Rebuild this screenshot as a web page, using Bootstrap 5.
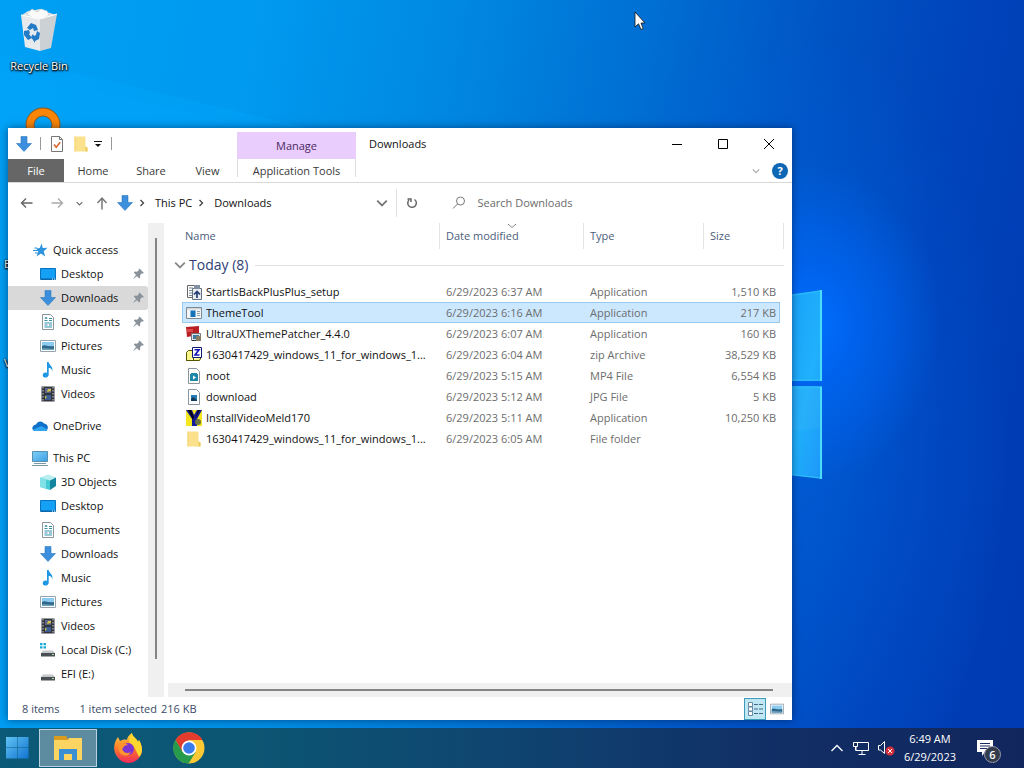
<!DOCTYPE html>
<html lang="en">
<head>
<meta charset="utf-8">
<meta name="viewport" content="width=device-width, initial-scale=1">
<title>Downloads</title>
<link href="https://cdn.jsdelivr.net/npm/bootstrap@5.3.0/dist/css/bootstrap.min.css" rel="stylesheet">
<style>
body{font-family:"Open Sans",sans-serif;font-size:11px;line-height:16px;color:#111;background:#0063d0}
button,input{font:inherit;color:inherit}
button{border:0;background:none;padding:0}
a{color:inherit;text-decoration:none}
svg{display:block;flex:none}
.ic{width:16px;height:16px}
.desktop{background:
 radial-gradient(ellipse 130px 160px at 810px 325px,#006eff 0,rgba(0,104,250,.7) 35%,rgba(0,90,230,0) 100%),
 radial-gradient(ellipse 230px 420px at 780px 440px,rgba(0,100,225,.6) 0,rgba(0,90,220,0) 100%),
 linear-gradient(100deg,#00a0f4 0,#009af0 22%,#0088e2 40%,#0070d4 56%,#0054c4 72%,#0043ba 85%,#003ab2 100%)}
.rays{inset:0;width:100%;height:100%}
.bin{left:5px;top:8px;width:68px}
.desk-label{color:#fff;text-shadow:1px 1px 2px #000,0 1px 2px #000,0 0 2px #000}
.ring{left:25px;top:107px}
.edge-e{left:4px;top:256px}
.edge-w{left:4px;top:355px}
.pointer{left:634px;top:11px}
.explorer{left:8px;right:232px;top:128px;bottom:8px;background:#fff;box-shadow:0 0 8px rgba(0,20,60,.55)}
.ribbon{border-bottom:1px solid #d8d8d8;height:55px}
.title-row{height:31px}
.tab-row{height:24px}
.ribbon-left{width:229px}
.sep{width:1px;height:13px;background:#9a9a9a}
.tab{color:#3a3a3a;text-align:center;height:23px}
.tab-file{background:#666;color:#fff;width:56px}
.w58{width:58px}.w54{width:55px}
.context-tab{width:119px;padding-top:4px}
.context-name{background:#e9cdfc;color:#4b2a63;height:27px}
.context-tools{border:solid #ddd;border-width:0 1px;height:18px;color:#3a3a3a;padding-top:4px}
.context-title{margin-left:13px}
.win-btn{width:46px;height:30px}
.address{height:40px}
.addr-line{width:1px;height:28px;background:#e2e2e2}
.search-area{width:53%}
.search-box{border:0;outline:0;background:none;min-width:0}
.search-box::placeholder{color:#6b6b6b;opacity:1}
.side{width:140px;padding-top:15px}
.side a{height:24px;display:flex;align-items:center;gap:5px;padding-left:32px;padding-right:2px;white-space:nowrap}
.side .top-level{padding-left:24px}
.side .current{background:#d9d9d9;border-radius:0 3px 3px 0}
.side ul+ul{margin-top:8px}
.vbar{width:16px;background:#f0f0f0;padding:15px 7px 38px}
.bar-thumb{background:#858585}
.hbar{height:14px;background:#f0f0f0;padding:6px 19px 6px 17px}
.files{table-layout:fixed;width:602px;margin-left:14px;border-collapse:separate;border-spacing:0}
.files td,.files th{padding:0 0 0 6px;overflow:hidden;white-space:nowrap;text-overflow:ellipsis;font-weight:400}
.files th{height:26px;color:#4c607a;border-right:1px solid #e5e5e5;position:relative}
.files th:first-child{padding-left:3px}
.files .group-cell{height:32px;padding:0;color:#2f4074;font-size:14px;overflow:visible}
.group-head{margin-left:-8px;gap:3px}
.files tbody td{height:21px;color:#6d6d6d}
.files tbody td.name-cell{padding:0 12px 0 4px;color:#111}
.name-cell div{gap:4px}
.files td.size-cell{padding-right:4px;text-align:right}
.files .chosen td{background:#cce8ff;border:solid #99c9ec;border-width:1px 0}
.files .chosen .name-cell{border-left-width:1px;padding-left:3px}
.files .chosen .size-cell{border-right-width:1px;padding-right:3px}
.sort-mark{left:67px;top:0}
.group-line{height:1px;background:#e2e2e2}
.status{height:23px;color:#3a4a66;padding-left:14px}
.view-btn{width:22px;height:22px}
.view-btn.on{background:#bfe8f4;border:1px solid #3d9ab8}
.taskbar{height:40px;background:linear-gradient(90deg,#0b5a78 0,#0c5573 25%,#0f4470 50%,#112f66 75%,#11265c 100%);color:#fff}
.task{width:61px;height:40px}
.task-open{width:58px;height:38px;background:#5d8ca0;border:1px solid #b9d3de}
.start{width:39px;padding-left:5px}
.clock{line-height:18px}
.tray{padding-right:30px}
.count{left:8px;top:7px;width:17px;height:17px;border-radius:50%;background:#333c4c;border:1px solid #99a;line-height:15px;font-weight:600}
</style>
</head>
<body>
<svg width="0" height="0" class="position-absolute" aria-hidden="true">
<defs>
<linearGradient id="gb" gradientUnits="userSpaceOnUse" x1="0" y1="0" x2="24" y2="24"><stop offset="0" stop-color="#63c6f5"/><stop offset="1" stop-color="#0f70cf"/></linearGradient>
<linearGradient id="gf" x1="0" y1="0" x2="0" y2="1"><stop offset="0" stop-color="#ffd23e"/><stop offset=".5" stop-color="#ff7a2a"/><stop offset="1" stop-color="#ee2a5c"/></linearGradient>
<linearGradient id="gm" x1="0" y1="0" x2="1" y2="1"><stop offset="0" stop-color="#7fd0f8"/><stop offset="1" stop-color="#3c9ee4"/></linearGradient>
<linearGradient id="gp" x1="0" y1="0" x2="1" y2="1"><stop offset="0" stop-color="#18a0f8"/><stop offset=".6" stop-color="#20b0fc"/><stop offset="1" stop-color="#1d96f8"/></linearGradient>
<symbol id="i-down" viewBox="0 0 16 16"><path d="M5 .5h6v7h4.500L8 15.500.5 7.500H5z" fill="#3c8fdc" stroke="#2d78c0" stroke-width=".6"/></symbol>
<symbol id="i-desktop" viewBox="0 0 16 16"><path d="M.5 2.500h15v11H.5z" fill="#14a0f5" stroke="#0a72bd"/><path d="M1 13h14" stroke="#0a5f9e"/><path d="M12 13h1M14 13h1" stroke="#fff"/></symbol>
<symbol id="i-star" viewBox="0 0 16 16"><path d="M9.500 1.500l1.300 4.500 4.700-.2-3.800 3.400 1.500 5.300-4.300-3-4.400 3 1.900-5L4 6.500l3.800-.6z" fill="#2d92dd"/><path d="M2.500 6H5M1 8.500h5M3 11h3" stroke="#2d92dd"/></symbol>
<symbol id="i-doc" viewBox="0 0 16 16"><path d="M2.500.5h8l3 3v12h-11z" fill="#fff" stroke="#8a959c"/><path d="M4.500 6.500h3M9 4.500h3M9 6.500h3M4.500 9h7.500M4.500 11h3M9 11h3M4.500 13h7.500M5 5l1-2 1 2" stroke="#338fae" fill="none"/></symbol>
<symbol id="i-pic" viewBox="0 0 16 16"><path d="M.5 2.500h15v11H.5z" fill="#fff" stroke="#93a4ae"/><path d="M2 4h12v8H2z" fill="#8ccaf0"/><path d="M2 8c3-2 5 1 12 0v4H2z" fill="#2e688b"/><path d="M2 10.500c4-1 8 1 12 0V12H2z" fill="#6ba0bd"/></symbol>
<symbol id="i-music" viewBox="0 0 16 16"><path d="M7 0h1.700c.2 3 4.500 4 3.600 9-.7-2.500-2-3-3.600-3v6.500c0 4-6 4-6 .8 0-2.600 2.600-3.200 4.300-2.400z" fill="#1f97e3"/></symbol>
<symbol id="i-video" viewBox="0 0 16 16"><path d="M1.500.5h13v15h-13z" fill="#31353b"/><path d="M3 1v14M13 1v14" stroke="#cfd4d8" stroke-dasharray="1.500 1.500"/><path d="M5 2h6v5H5z" fill="#59678b"/><path d="M5 9h6v5H5z" fill="#3e5e92"/><path d="M8 3h3v2L7 6zM5 10l2 1-2 2" fill="#d9c545"/></symbol>
<symbol id="i-cloud" viewBox="0 0 16 16"><path d="M4 6.500a4.500 4.500 0 0 1 8-1A4 4 0 0 1 15.500 11c-.3 1.300-1.200 2-2.500 2H3.500C-.8 13-.8 7.500 4 6.500z" fill="#1170c9"/><path d="M1 11.500L9.500 8l6 3.500c-.5 1-1.300 1.500-2.500 1.500H3.500C2.300 13 1.400 12.400 1 11.500z" fill="#2fa4ef"/></symbol>
<symbol id="i-pc" viewBox="0 0 16 16"><path d="M.5 1.500h15v10H.5z" fill="url(#gm)" stroke="#5890ae"/><path d="M2 13.500h12M0 15.500h16" stroke="#7a98a8"/></symbol>
<symbol id="i-cube" viewBox="0 0 16 16"><path d="M0 3.500L8 .5l8 3-6 3z" fill="#b7eef0"/><path d="M0 3.500l10 3V16L0 13z" fill="#45cbd5"/><path d="M10 6.500l6-3V12l-6 4z" fill="#14859e"/><path d="M0 3.500l6 2v9L0 13z" fill="#9be9ec" opacity=".7"/></symbol>
<symbol id="i-disk" viewBox="0 0 16 16"><path d="M3 8.500h10l2 2.500H1z" fill="#c4c8ca"/><path d="M1 11h14v3.500H1z" fill="#4a4f53"/><path d="M12 12.500h2" stroke="#a9e7a2"/></symbol>
<symbol id="i-tiles" viewBox="0 0 16 16"><path d="M0 1h2.500v2.300H0zM3.500 1H6v2.300H3.500zM0 4.300h2.500v2.300H0zM3.500 4.300H6v2.300H3.500z" fill="#16acd7"/></symbol>
<symbol id="i-pin" viewBox="0 0 16 16"><path d="M9.500 2.500l4.500 4.500-1.200.6-.9-.3-1.800 2 .1 2.300-1 .9L7 10.300l-4.200 3L6 9 3.800 6.600l.9-1 2.300.1 2-1.800-.3-.8z" fill="#8a9299"/></symbol>
<symbol id="i-folder" viewBox="0 0 16 16"><path d="M1.500.5h11v10l2 1v4h-13z" fill="#fce18c"/><path d="M12.500 10.500l2 1v4h-2z" fill="#eccb61"/><path d="M1.500.5v15h1V.5z" fill="#f3d372"/></symbol>
<symbol id="i-check" viewBox="0 0 16 16"><path d="M2.500.5h8l3 3v12h-11z" fill="#fff" stroke="#777"/><path d="M10.500.5v3h3" fill="none" stroke="#777"/><path d="M5 8.500l2.200 2.700 4-5" fill="none" stroke="#dd6531" stroke-width="1.600"/></symbol>
<symbol id="i-chev" viewBox="0 0 10 10"><path d="M1 3l4 4 4-4" fill="none" stroke="currentColor" stroke-width="1.500"/></symbol>
<symbol id="i-next" viewBox="0 0 10 10"><path d="M3.500 2l3 3-3 3" fill="none" stroke="currentColor" stroke-width="1.300"/></symbol>
<symbol id="i-setup" viewBox="0 0 16 16"><path d="M1.500 1.500h8v12h-8z" fill="#fff" stroke="#666"/><path d="M3 4h4M3 6.500h3M3 9h3M3 11.500h3" stroke="#789"/><path d="M6.500 4.500h9v11h-9z" fill="#e9edf2" stroke="#66707a"/><path d="M8 1h6v4H8z" fill="#8390a2"/><path d="M11 14V8M8 10.500l3-3 3 3" fill="none" stroke="#223c70" stroke-width="1.700"/></symbol>
<symbol id="i-app" viewBox="0 0 16 16"><path d="M.5 2.500h15v11H.5z" fill="#f4f6f7" stroke="#7e8a92"/><path d="M1 3h14v1.500H1z" fill="#cfd5da"/><path d="M4.500 5.500h5v6.500h-5z" fill="#1372b8"/><path d="M11 6.500h3M11 8.500h3M11 10.500h3" stroke="#8ba0ad"/></symbol>
<symbol id="i-patch" viewBox="0 0 16 16"><path d="M0 1l13-1v9L1 11z" fill="#b81f25"/><path d="M1 3h6v3H1z" fill="#d8494a"/><path d="M5.500 7.500h9v7h-9z" fill="#dfe3e5" stroke="#777"/><path d="M7 9h6v4H7z" fill="#3b7aa4"/><path d="M10 10h5v5h-5z" fill="#8b7d62"/><path d="M6 14.500h4" stroke="#333"/></symbol>
<symbol id="i-zip" viewBox="0 0 16 16"><path d="M.5 5.500l2-2h5v10H.5zM.5 13.500h13l1.500-3" fill="#f9f68a" stroke="#555500"/><path d="M6.500.5h9v10h-9z" fill="#fff" stroke="#111a77"/><path d="M8.500 2.800h4.500L9 8h4.500" fill="none" stroke="#1414b4" stroke-width="1.600"/></symbol>
<symbol id="i-mp4" viewBox="0 0 16 16"><path d="M2.500.5h8l3 3v12h-11z" fill="#fff" stroke="#8a959c"/><path d="M4 6h8v7H4z" fill="#1f88a8"/><path d="M5 5.500h6" stroke="#1f88a8"/><path d="M7 7.500v4l3-2z" fill="#fff"/></symbol>
<symbol id="i-jpg" viewBox="0 0 16 16"><path d="M2.500.5h8l3 3v12h-11z" fill="#fff" stroke="#8a959c"/><path d="M5 6h6v6H5z" fill="#257bb7"/><path d="M5 10l2-2 4 3v1H5z" fill="#123d5c"/></symbol>
<symbol id="i-meld" viewBox="0 0 16 16"><path d="M0 0h16v16H0z" fill="#f5e71e"/><path d="M0 0h6l2 5 3-5h5l-5 9v7H6V9z" fill="#151a9e"/><path d="M2 0h3l3 7-1 3zM12 0h2L9 9" fill="#03040f"/><circle cx="12" cy="12" r="3" fill="#6c7444"/></symbol>
</defs>
</svg>
<div class="vh-100 d-flex flex-column overflow-hidden">
<main class="desktop flex-grow-1 position-relative overflow-hidden">
 <svg class="rays position-absolute" viewBox="0 0 1024 728" preserveAspectRatio="none" aria-hidden="true">
  <path d="M0 55L380 145 0 130z" fill="#00a8ff" opacity=".3"/><path d="M90 90L260 128H0V70z" fill="#00b0ff" opacity=".12"/>
  <path d="M780 296l42-6v91h-42zM780 386h42v93l-42-5z" fill="url(#gp)"/><path d="M780 386h42v42l-42 4z" fill="#37b4f8" opacity=".3"/>
  <path d="M780 297l41-6M780 380h41M780 388h41M780 473l41 5" fill="none" stroke="#2fc0fa"/><path d="M821 290v91M821 387v92" stroke="#4addf8" stroke-width="2"/>
 </svg>
 <div class="bin position-absolute text-center">
  <svg width="40" height="46" viewBox="0 0 40 46" class="mx-auto mb-1"><path d="M3 7l6-4 7-1 5-1 7 3 9 3-6 5-20-1z" fill="#dfe3e6"/><path d="M8 6l5-5 5 3 4-3 6 2 2 4-6 4-10-1z" fill="#fafafa" stroke="#c5cacf" stroke-width=".6"/><path d="M2 7l19 4v32L6 39z" fill="#e7eaed"/><path d="M21 11l17-5-6 34-11 3z" fill="#ccd1d5"/><path d="M2 7l19 4 17-5" fill="none" stroke="#fff"/><g fill="#237ac7"><path d="M8 20l4-5 5 2 2 5-4 1-1-3-3 2z"/><path d="M5 23l5-1 1 3-1 1 3 4-4 2-4-5z"/><path d="M12 29l2-3 1 2 2-1 1-4 3 2-1 6-4 2v2z"/></g></svg>
  <div class="desk-label text-nowrap">Recycle Bin</div>
 </div>
 <svg class="ring position-absolute" width="36" height="36" viewBox="0 0 36 36" aria-hidden="true"><circle cx="18" cy="18" r="13" fill="none" stroke="#8b5a20" stroke-width="9"/><circle cx="18" cy="18" r="13" fill="none" stroke="#fb8505" stroke-width="7"/></svg>
 <div class="edge-e desk-label position-absolute">E</div><div class="edge-w desk-label position-absolute">V</div>
 <section class="explorer position-absolute d-flex flex-column" aria-label="Downloads">
  <header class="ribbon d-flex">
   <div class="ribbon-left">
    <div class="title-row d-flex align-items-center ps-2">
     <svg class="ic"><use href="#i-down"/></svg><span class="sep ms-2 me-2"></span>
     <button aria-label="Properties"><svg class="ic"><use href="#i-check"/></svg></button>
     <button class="ms-2" aria-label="New folder"><svg class="ic"><use href="#i-folder"/></svg></button>
     <button class="ms-1" aria-label="Customize"><svg width="10" height="10" viewBox="0 0 10 10"><path d="M1 2.500h8" stroke="#111"/><path d="M2 5h6L5 8z" fill="#111"/></svg></button><span class="sep ms-2"></span>
    </div>
    <nav class="tab-row d-flex"><button class="tab tab-file">File</button><button class="tab w58">Home</button><button class="tab w58">Share</button><button class="tab w54">View</button></nav>
   </div>
   <div class="context-tab text-center"><div class="context-name d-flex align-items-center justify-content-center">Manage</div><div class="context-tools text-nowrap">Application Tools</div></div>
   <div class="flex-grow-1">
    <div class="title-row d-flex align-items-center"><span class="context-title me-auto">Downloads</span>
     <button class="win-btn" aria-label="Minimize"><svg width="12" height="12" class="mx-auto"><path d="M1 6.500h10" stroke="#000"/></svg></button>
     <button class="win-btn" aria-label="Maximize"><svg width="12" height="12" class="mx-auto"><path d="M1.500 1.500h9v9h-9z" stroke="#000" fill="none"/></svg></button>
     <button class="win-btn" aria-label="Close"><svg width="12" height="12" class="mx-auto"><path d="M1 1l10 10M11 1L1 11" stroke="#000"/></svg></button>
    </div>
    <div class="tab-row d-flex align-items-center justify-content-end gap-2 pe-1">
     <button class="me-1" aria-label="Expand ribbon"><svg width="8" height="8" color="#aaa"><use href="#i-chev"/></svg></button>
     <button aria-label="Help"><svg width="16" height="16" viewBox="0 0 16 16"><circle cx="8" cy="8" r="8" fill="#0d67b5"/><text x="8" y="12" text-anchor="middle" font-size="11" font-weight="700" fill="#fff">?</text></svg></button>
    </div>
   </div>
  </header>
  <div class="address d-flex align-items-center">
   <button class="ms-2 ps-1" aria-label="Back"><svg width="14" height="14" color="#666" viewBox="0 0 14 14"><path d="M12.500 7H1.500M6 2.500L1.500 7 6 11.500" fill="none" stroke="currentColor" stroke-width="1.400"/></svg></button>
   <button class="ms-3" aria-label="Forward"><svg width="14" height="14" color="#aaa" viewBox="0 0 14 14"><path d="M1.500 7h11M8 2.500L12.500 7 8 11.500" fill="none" stroke="currentColor" stroke-width="1.400"/></svg></button>
   <button class="ms-2 ps-1" aria-label="Recent"><svg width="7" height="7" color="#666"><use href="#i-chev"/></svg></button>
   <button class="ms-2 ps-1" aria-label="Up"><svg width="14" height="14" viewBox="0 0 14 14"><path d="M7 13.500V2.500M2.500 7L7 2l4.500 5" fill="none" stroke="#777" stroke-width="1.500"/></svg></button>
   <svg class="ic ms-2"><use href="#i-down"/></svg>
   <svg width="10" height="10" class="ms-1" color="#444"><use href="#i-next"/></svg>
   <a href="#" class="ms-2">This PC</a><svg width="10" height="10" class="ms-1 me-2" color="#444"><use href="#i-next"/></svg><a href="#">Downloads</a>
   <div class="search-area ms-auto d-flex align-items-center">
    <button class="me-2" aria-label="Locations"><svg width="12" height="12" color="#777"><use href="#i-chev"/></svg></button>
    <span class="addr-line"></span>
    <button class="ms-2" aria-label="Refresh"><svg width="14" height="14" viewBox="0 0 14 14"><path d="M9.500 3.500a4.300 4.300 0 1 1-5.500.5M2.500 3H6v3" fill="none" stroke="#666" stroke-width="1.500"/></svg></button>
    <label for="find" class="ms-4 ps-2 me-2"><svg width="16" height="16" viewBox="0 0 16 16"><circle cx="9.500" cy="6" r="4" fill="none" stroke="#777"/><path d="M6.500 9L2 13.500" stroke="#777"/></svg></label>
    <input id="find" class="search-box flex-grow-1" type="search" placeholder="Search Downloads" aria-label="Search Downloads">
   </div>
  </div>
  <div class="d-flex flex-grow-1">
   <nav class="side">
    <ul class="list-unstyled mb-0">
     <li><a class="top-level" href="#"><svg class="ic"><use href="#i-star"/></svg>Quick access</a></li>
     <li><a href="#"><svg class="ic"><use href="#i-desktop"/></svg>Desktop<svg class="ic ms-auto"><use href="#i-pin"/></svg></a></li>
     <li><a href="#" class="current"><svg class="ic"><use href="#i-down"/></svg>Downloads<svg class="ic ms-auto"><use href="#i-pin"/></svg></a></li>
     <li><a href="#"><svg class="ic"><use href="#i-doc"/></svg>Documents<svg class="ic ms-auto"><use href="#i-pin"/></svg></a></li>
     <li><a href="#"><svg class="ic"><use href="#i-pic"/></svg>Pictures<svg class="ic ms-auto"><use href="#i-pin"/></svg></a></li>
     <li><a href="#"><svg class="ic"><use href="#i-music"/></svg>Music</a></li>
     <li><a href="#"><svg class="ic"><use href="#i-video"/></svg>Videos</a></li>
    </ul>
    <ul class="list-unstyled mb-0"><li><a class="top-level" href="#"><svg class="ic"><use href="#i-cloud"/></svg>OneDrive</a></li></ul>
    <ul class="list-unstyled mb-0">
     <li><a class="top-level" href="#"><svg class="ic"><use href="#i-pc"/></svg>This PC</a></li>
     <li><a href="#"><svg class="ic"><use href="#i-cube"/></svg>3D Objects</a></li>
     <li><a href="#"><svg class="ic"><use href="#i-desktop"/></svg>Desktop</a></li>
     <li><a href="#"><svg class="ic"><use href="#i-doc"/></svg>Documents</a></li>
     <li><a href="#"><svg class="ic"><use href="#i-down"/></svg>Downloads</a></li>
     <li><a href="#"><svg class="ic"><use href="#i-music"/></svg>Music</a></li>
     <li><a href="#"><svg class="ic"><use href="#i-pic"/></svg>Pictures</a></li>
     <li><a href="#"><svg class="ic"><use href="#i-video"/></svg>Videos</a></li>
     <li><a href="#"><svg class="ic"><use href="#i-disk"/><use href="#i-tiles"/></svg>Local Disk (C:)</a></li>
     <li><a href="#"><svg class="ic"><use href="#i-disk"/></svg>EFI (E:)</a></li>
    </ul>
   </nav>
   <div class="vbar me-1"><div class="bar-thumb h-100"></div></div>
   <div class="flex-grow-1 d-flex flex-column">
    <table class="files">
     <colgroup><col style="width:258px"><col style="width:144px"><col style="width:120px"><col style="width:76px"><col style="width:4px"></colgroup>
     <thead><tr><th>Name</th><th>Date modified<svg class="sort-mark position-absolute" width="10" height="6" viewBox="0 0 10 6"><path d="M1 1l4 3.500L9 1" fill="none" stroke="#888"/></svg></th><th>Type</th><th colspan="2">Size</th></tr></thead>
     <tbody>
      <tr><td colspan="5" class="group-cell"><div class="group-head d-flex align-items-center"><svg width="12" height="12" color="#888"><use href="#i-chev"/></svg>Today (8)<span class="group-line flex-grow-1 ms-1"></span></div></td></tr>
      <tr><td class="name-cell"><div class="d-flex align-items-center"><svg class="ic"><use href="#i-setup"/></svg>StartIsBackPlusPlus_setup</div></td><td>6/29/2023 6:37 AM</td><td>Application</td><td class="size-cell">1,510 KB</td></tr>
      <tr class="chosen"><td class="name-cell"><div class="d-flex align-items-center"><svg class="ic"><use href="#i-app"/></svg>ThemeTool</div></td><td>6/29/2023 6:16 AM</td><td>Application</td><td class="size-cell">217 KB</td></tr>
      <tr><td class="name-cell"><div class="d-flex align-items-center"><svg class="ic"><use href="#i-patch"/></svg>UltraUXThemePatcher_4.4.0</div></td><td>6/29/2023 6:07 AM</td><td>Application</td><td class="size-cell">160 KB</td></tr>
      <tr><td class="name-cell"><div class="d-flex align-items-center"><svg class="ic"><use href="#i-zip"/></svg>1630417429_windows_11_for_windows_1...</div></td><td>6/29/2023 6:04 AM</td><td>zip Archive</td><td class="size-cell">38,529 KB</td></tr>
      <tr><td class="name-cell"><div class="d-flex align-items-center"><svg class="ic"><use href="#i-mp4"/></svg>noot</div></td><td>6/29/2023 5:15 AM</td><td>MP4 File</td><td class="size-cell">6,554 KB</td></tr>
      <tr><td class="name-cell"><div class="d-flex align-items-center"><svg class="ic"><use href="#i-jpg"/></svg>download</div></td><td>6/29/2023 5:12 AM</td><td>JPG File</td><td class="size-cell">5 KB</td></tr>
      <tr><td class="name-cell"><div class="d-flex align-items-center"><svg class="ic"><use href="#i-meld"/></svg>InstallVideoMeld170</div></td><td>6/29/2023 5:11 AM</td><td>Application</td><td class="size-cell">10,250 KB</td></tr>
      <tr><td class="name-cell"><div class="d-flex align-items-center"><svg class="ic"><use href="#i-folder"/></svg>1630417429_windows_11_for_windows_1...</div></td><td>6/29/2023 6:05 AM</td><td>File folder</td><td class="size-cell"></td></tr>
     </tbody>
    </table>
    <div class="hbar mt-auto"><div class="bar-thumb h-100"></div></div>
   </div>
  </div>
  <footer class="status d-flex align-items-center"><span>8 items</span><span class="ms-3 ps-1">1 item selected</span><span class="ms-1">216 KB</span>
   <button class="view-btn on ms-auto" aria-label="Details"><svg width="20" height="20" viewBox="0 0 20 20"><path d="M3.500 3.500h4v4h-4zM3.500 8h4v4h-4zM3.500 12.500h4v4h-4z" fill="#fff" stroke="#6b8ba4"/><path d="M9 5.500h4M14 5.500h4M9 10h4M14 10h4M9 14.500h4M14 14.500h4" stroke="#476b86"/></svg></button>
   <button class="view-btn me-1" aria-label="Thumbnails"><svg width="14" height="14" class="mx-auto"><use href="#i-pic"/></svg></button>
  </footer>
 </section>
 <svg class="pointer position-absolute" width="12" height="20" viewBox="0 0 12 20" aria-hidden="true"><path d="M1 1v15l3.500-3.200L7 18.500l2.200-1L7 12h4z" fill="#fff" stroke="#111" stroke-width=".8"/></svg>
</main>
<footer class="taskbar d-flex align-items-center">
 <button class="start" aria-label="Start"><svg width="24" height="24" viewBox="0 0 24 24"><path d="M1 1h11v10.500H1zM12.500 1h11v10.500h-11zM1 12h11v10.500H1zM12.500 12h11v10.500h-11z" fill="url(#gb)"/></svg></button>
 <button class="task-open d-flex align-items-center justify-content-center" aria-label="File Explorer"><svg width="30" height="26" viewBox="0 0 30 26"><path d="M1 1h12l2 3h13v6H1z" fill="#d99c1e"/><path d="M1 5h14l1-2h13v22H1z" fill="#fbd461"/><path d="M6 25V14h18v11h-5v-6h-8v6z" fill="#3b8fd3"/></svg></button>
 <button class="task d-flex align-items-center justify-content-center" aria-label="Firefox"><svg width="32" height="32" viewBox="0 0 32 32"><path d="M6 5l2 4c2-1 5-2 7-1 0-3 2-5 5-7 0 4 5 5 6 9l1-2c5 9 3 16-2 20-5 4-13 4-18-1C1 21 .5 12 6 5z" fill="url(#gf)"/><path d="M20 1c0 4 5 5 6 9l1-2c4 7 4 13 0 17-3-6-4-11-10-15 0-4 1-7 3-9z" fill="#ffd62e"/><circle cx="16" cy="17" r="6" fill="#7c35d0"/><path d="M7 11c4-1 6 0 9 2-5 0-4 3-6 4 2 4 5 5 9 3-2 5-10 5-12-1-1-3-1-5 0-8z" fill="#ff942e"/></svg></button>
 <button class="task d-flex align-items-center justify-content-center" aria-label="Chrome"><svg width="32" height="32" viewBox="0 0 32 32"><circle cx="16" cy="16" r="15.500" fill="#fcc934"/><path d="M2.600 8A15.500 15.500 0 0 1 29.500 8H16L9 20z" fill="#e33b2e"/><path d="M2.600 8l7 12 13 0-7 11.500A15.500 15.500 0 0 1 2.600 8z" fill="#259b4b"/><circle cx="16" cy="16" r="7.500" fill="#fff"/><circle cx="16" cy="16" r="5.800" fill="#3a7cec"/></svg></button>
 <div class="tray ms-auto d-flex align-items-center">
  <button class="me-2" aria-label="Hidden icons"><svg width="14" height="14" viewBox="0 0 14 14"><path d="M1.500 10L7 4.500 12.500 10" fill="none" stroke="#fff" stroke-width="1.300"/></svg></button>
  <button class="me-2" aria-label="Network"><svg width="18" height="16" viewBox="0 0 18 16"><path d="M5 2.500h11.500v8H4V7M10 11v3M6.500 14.500h7M1.500 2.500h4v4h-4zM3.500 6.500v4" fill="none" stroke="#fff"/></svg></button>
  <button class="me-1" aria-label="Volume muted"><svg width="18" height="16" viewBox="0 0 18 16"><path d="M.5 5.500h2l4-4v12l-4-3.500h-2z" fill="none" stroke="#fff"/><circle cx="12" cy="11" r="4.500" fill="#d6303c"/><path d="M10 9l4 4M14 9l-4 4" stroke="#fff"/></svg></button>
  <div class="clock text-center mx-1">6:49 AM<br>6/29/2023</div>
  <button class="position-relative ms-3" aria-label="Notifications"><svg width="18" height="18" viewBox="0 0 18 18"><path d="M1 1h16v12H9l-3 4v-4H1z" fill="#fff"/><path d="M4 4.500h10M4 7h10M4 9.500h7" stroke="#15295c"/></svg><span class="count position-absolute text-center">6</span></button>
 </div>
</footer>
</div>
<script src="https://cdn.jsdelivr.net/npm/bootstrap@5.3.0/dist/js/bootstrap.bundle.min.js"></script>
</body>
</html>
